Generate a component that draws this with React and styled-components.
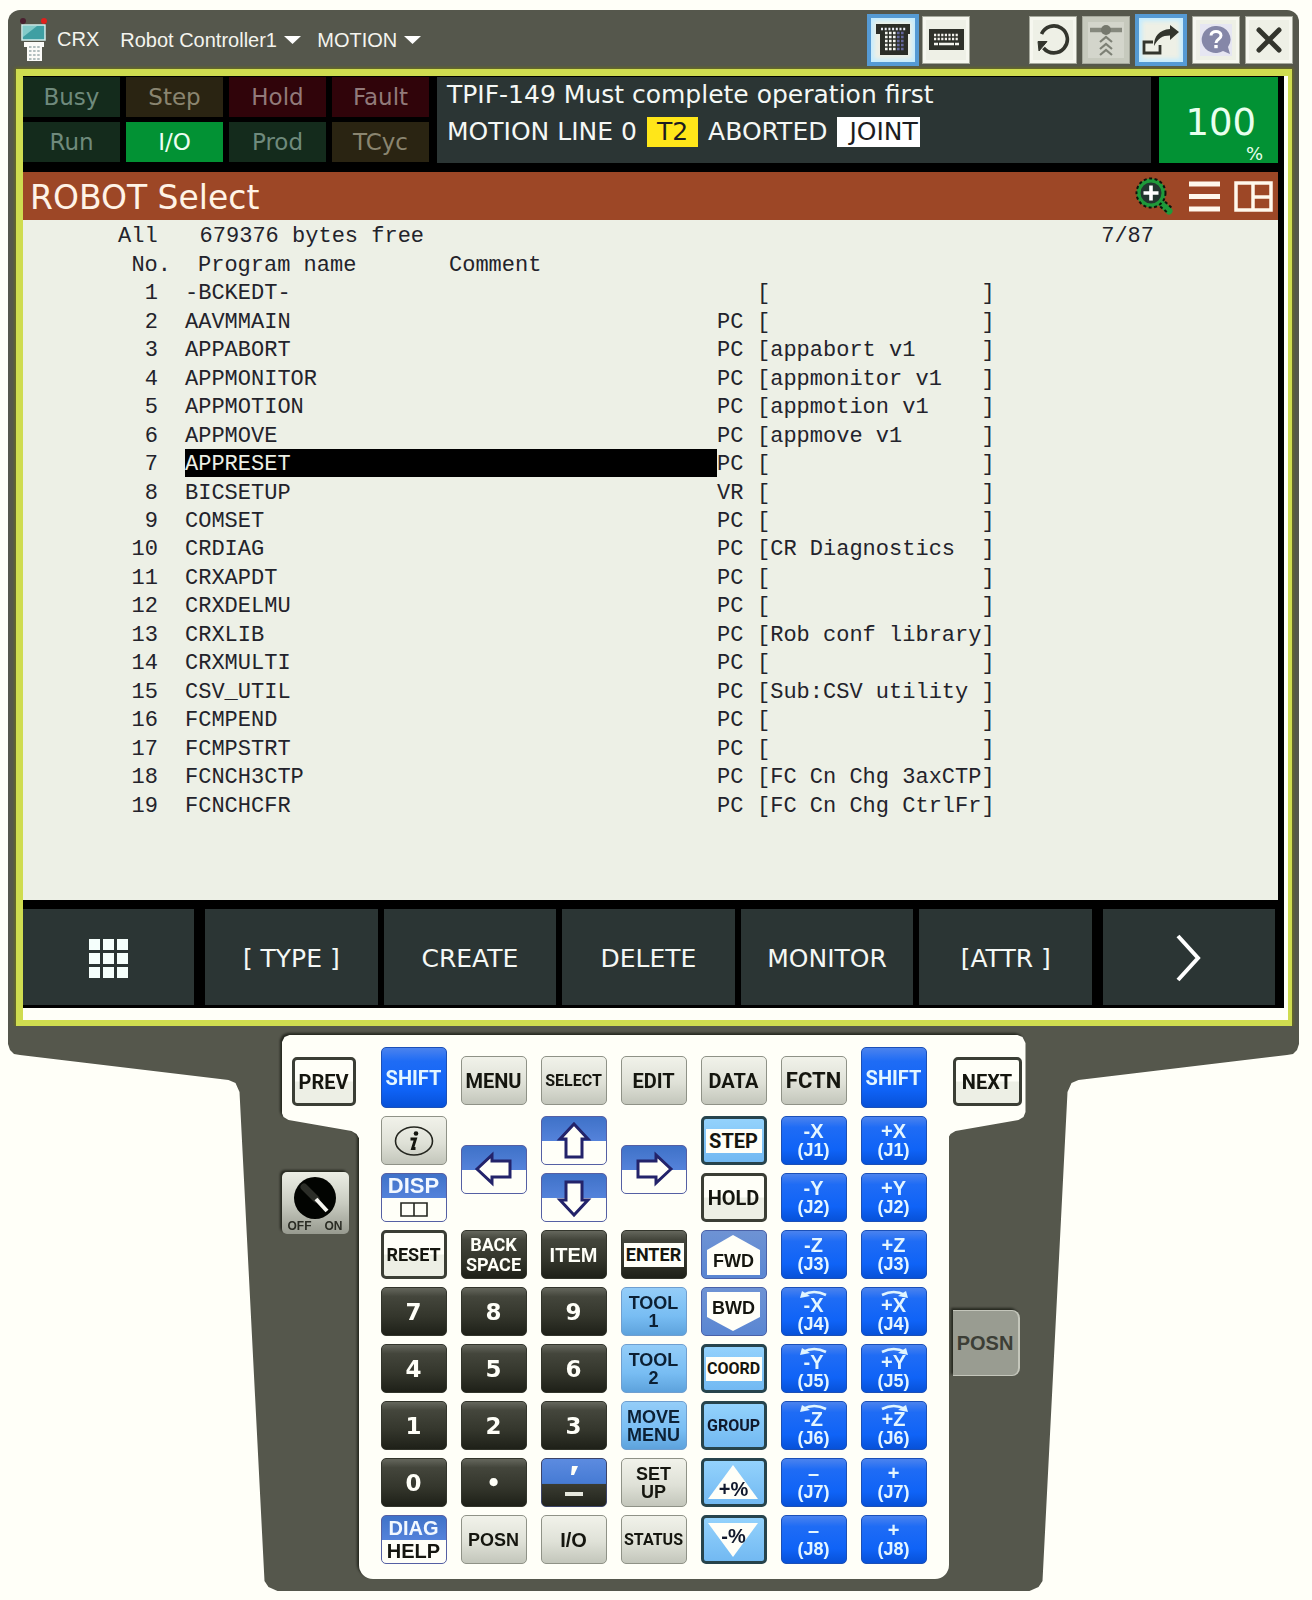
import React from "react";
import styled, { createGlobalStyle, css } from "styled-components";

const ui = `"DejaVu Sans", Verdana, sans-serif`;
const arial = `"Liberation Sans", Arial, sans-serif`;
const narrow = `Roboto, "Arial Narrow", sans-serif`;

const Global = createGlobalStyle`
  * { box-sizing: border-box; }
  body { margin: 0; background: #fffff8; font-family: ${arial}; }
  button { font: inherit; color: inherit; padding: 0; border: 0; cursor: pointer; }
`;

const Device = styled.main`
  margin: 0 13px 9px 8px;
  padding-top: 10px;
  min-width: 1180px;
`;

/* ---------- window header ---------- */

const Header = styled.header`
  display: flex;
  align-items: center;
  height: 59px;
  padding: 0 6px 0 11px;
  background: #55574c;
  border-radius: 12px 12px 0 0;
  color: #f4f4ee;
  font-size: 20px;
`;

const AppName = styled.span`
  margin: 0 21px 0 8px;
`;

const Picker = styled.label`
  display: grid;
  align-items: center;
  margin-right: 16px;
  > * {
    grid-area: 1 / 1;
  }
  svg {
    justify-self: end;
    pointer-events: none;
  }
`;

const PickerSelect = styled.select`
  appearance: none;
  border: 0;
  padding: 0 24px 0 0;
  background: transparent;
  color: inherit;
  font: inherit;
`;

const Tools = styled.div`
  display: flex;
  align-items: center;
  gap: ${(p) => p.$gap}px;
  margin-left: ${(p) => (p.$first ? "auto" : "59px")};
`;

const Tool = styled.button`
  display: grid;
  place-items: center;
  width: 48px;
  height: 48px;
  border: 1px solid #a5a89c;
  background: #eef0e6;
  box-shadow: inset 0 0 0 3px #f6f7ef;
  ${(p) =>
    p.$active &&
    css`
      width: 52px;
      height: 52px;
      border: 4px solid #559ad4;
      box-shadow: inset 0 0 4px 3px #c4ecff;
    `}
  ${(p) =>
    p.disabled &&
    css`
      background: #d3d5cb;
      box-shadow: inset 0 0 0 5px #c6c9bd;
    `}
`;

/* ---------- screen ---------- */

const Screen = styled.section`
  margin: 0;
  padding: 0 7px 0 8px;
  background: #55574c;
`;

const Bezel = styled.div`
  border: solid #cfdc50;
  border-width: 7px 4px 6px 7px;
  padding: 0 4px 12px 0;
  background: #fffff8;
  box-shadow: 0 0 3px 1px #6c7018;
`;

const Display = styled.div`
  background: #000;
  padding-right: 6px;
  font-family: ${ui};
`;

const StatusBar = styled.div`
  display: flex;
  gap: 8px;
  padding: 1px 0 9px;
`;

const Flags = styled.div`
  display: grid;
  grid-template-columns: repeat(4, 97px);
  grid-template-rows: 40px 40px;
  gap: 5px 6px;
  height: 86px;
`;

const tones = {
  green: ["#142b1c", "#6f8a7c"],
  amber: ["#2a2412", "#8a8570"],
  red: ["#30040a", "#927a7a"],
  on: ["#029234", "#ecfff2"],
};

const Flag = styled.span`
  display: grid;
  place-items: center;
  font-size: 23px;
  line-height: 38px;
  background: ${(p) => tones[p.$tone][0]};
  color: ${(p) => tones[p.$tone][1]};
`;

const Message = styled.div`
  flex: 1;
  padding: 2px 10px;
  background: #2b3534;
  color: #f5f8f5;
  font-size: 25px;
`;

const Alarm = styled.p`
  margin: 0;
  line-height: 32px;
`;

const State = styled.p`
  display: flex;
  margin: 6px 0 0;
  gap: 10px;
  line-height: 30px;
`;

const Tag = styled.span`
  padding: 0 ${(p) => (p.$mode ? 10 : 2)}px 0 ${(p) => (p.$mode ? 10 : 12)}px;
  background: ${(p) => (p.$mode ? "#ffe619" : "#fff")};
  color: #1c1c20;
`;

const Override = styled.div`
  width: 119px;
  padding: 24px 15px 0 0;
  background: #029234;
  color: #e8ffee;
  text-align: right;
`;

const OverrideValue = styled.div`
  padding-right: 7px;
  font-size: 37px;
  line-height: 44px;
`;

const OverrideUnit = styled.div`
  font-size: 18px;
  line-height: 18px;
`;

const TitleBar = styled.div`
  display: flex;
  align-items: center;
  height: 48px;
  padding: 0 5px 0 7px;
  background: #9d4726;
  color: #fff3e6;
`;

const Title = styled.h1`
  flex: 1;
  margin: 0;
  padding-top: 4px;
  font-size: 33px;
  font-weight: 400;
  line-height: 44px;
`;

const TitleButton = styled.button`
  display: grid;
  place-items: center;
  margin-left: 14px;
  background: transparent;
`;

const Listing = styled.div`
  height: 680px;
  background: #edf0e6;
  color: #23232b;
  font-family: "Liberation Mono", "Courier New", monospace;
  font-size: 22px;
  line-height: 24px;
`;

const Summary = styled.div`
  display: flex;
  height: 30px;
  padding: 5px 124px 0 95px;
`;

const Free = styled.span`
  flex: 1;
  padding-left: 42px;
`;

const Programs = styled.table`
  width: 100%;
  height: 569px;
  border-collapse: collapse;
  table-layout: fixed;
`;

const HeadCell = styled.th`
  padding: 4px ${(p) => (p.$right ? 14 : 0)}px 0 ${(p) => (p.$inset ? 13 : 0)}px;
  font-weight: 400;
  text-align: ${(p) => (p.$right ? "right" : "left")};
`;

const Cell = styled.td`
  padding: 4px ${(p) => (p.$right ? 27 : 0)}px 0 0;
  text-align: ${(p) => (p.$right ? "right" : "left")};
  white-space: pre;
  ${(p) =>
    p.$selected &&
    css`
      background: #000;
      color: #edf0e6;
    `}
`;

const SoftKeys = styled.nav`
  display: grid;
  grid-template-columns: 171px 1fr 172px;
  gap: 11px;
  height: 108px;
  padding: 9px 3px 3px 0;
`;

const SoftGroup = styled.div`
  display: grid;
  grid-template-columns: repeat(5, 1fr);
  gap: 6px;
`;

const SoftKey = styled.button`
  display: grid;
  place-items: center;
  padding-top: 2px;
  background: #2b3534;
  color: #f5f8f5;
  font-size: 25px;
  white-space: pre;
`;

/* ---------- key pad ---------- */

const Housing = styled.section`
  display: flex;
  justify-content: center;
  height: 565px;
  padding-top: 9px;
  background: #55574c;
  clip-path: polygon(
    0 0, 100% 0, 100% 18px, calc(100% - 2px) 24px, calc(100% - 6px) 28px, calc(100% - 12px) 29px,
    calc(50% + 425px) 54px, calc(50% + 418px) 57px, calc(50% + 414px) 66px,
    calc(50% + 389px) 555px, calc(50% + 385px) 561px, calc(50% + 376px) 100%,
    calc(50% - 376px) 100%, calc(50% - 385px) 561px, calc(50% - 389px) 555px,
    calc(50% - 414px) 66px, calc(50% - 418px) 57px, calc(50% - 425px) 54px,
    12px 29px, 6px 28px, 2px 24px, 0 18px
  );
`;

const Plate = styled.div`
  display: flex;
  align-items: flex-start;
  filter: drop-shadow(-2px -2px 1px #262820);
`;

const Side = styled.div`
  width: 78px;
`;

const Wing = styled.div`
  height: 104px;
  padding: 22px 4px 0 ${(p) => (p.$right ? 5 : 10)}px;
  background: #fffff8;
  clip-path: ${(p) =>
    p.$right
      ? "polygon(0 0, 70px 0, 75px 2px, 78px 8px, 78px 77px, 76px 82px, 71px 85px, 8px 96px, 3px 99px, 0 104px)"
      : "polygon(100% 0, 8px 0, 3px 2px, 0 8px, 0 77px, 2px 82px, 7px 85px, 70px 96px, 75px 99px, 100% 104px)"};
`;

/* overlaps the wings by a pixel on either side so that no seam shows */
const Pad = styled.div`
  display: grid;
  grid-template-columns: repeat(7, 1fr);
  grid-template-rows: 61px repeat(8, 49px);
  gap: 8px 14px;
  width: 590px;
  margin: 0 -1px;
  padding: 12px 22px 15px;
  background: #fffff8;
  border-radius: 0 0 14px 14px;
`;

const skins = {
  light: css`
    background: linear-gradient(#f1f2ea, #dfe1d7 55%, #c3c6bb);
    border: 1px solid #8f9287;
    color: #15160f;
  `,
  outline: css`
    background: linear-gradient(#fffff8 48%, #edefe5 52%);
    border: 3px solid #3b3e35;
    color: #15160f;
  `,
  blue: css`
    background: linear-gradient(#4b83ee, #1f6cf5 22%, #0f63f7 70%, #0751d8);
    border: 1px solid #1b50b8;
    color: #e4f6ff;
  `,
  dark: css`
    background: linear-gradient(#65675d, #44463c 18%, #34362c 60%, #1e2018);
    border: 1px solid #33352c;
    color: #fffff8;
  `,
  sky: css`
    background: linear-gradient(#94cdf8, #78bdf3 60%, #5da2dc);
    border: 1px solid #6f9fd0;
    color: #0c2034;
  `,
  skyOutline: css`
    background: linear-gradient(#93d2fc, #72b9f2);
    border: 3px solid #27444c;
    color: #10182c;
  `,
  split: css`
    background: linear-gradient(#3f72c8, #5482da 50%, #fffff8 50%);
    border: 1px solid #5560a4;
    color: #15160f;
  `,
  steel: css`
    background: linear-gradient(#6e93d4, #5a86d2);
    border: 1px solid #4a62a8;
    color: #15160f;
  `,
  splitDark: css`
    background: linear-gradient(#5c8be0, #467bd4 52%, #3a3c32 54%, #22241c);
    border: 1px solid #3c4468;
    color: #fffff8;
  `,
};

const Key = styled.button`
  display: grid;
  align-content: center;
  justify-content: stretch;
  justify-items: center;
  grid-column: ${(p) => p.$col};
  grid-row: ${(p) => p.$row};
  align-self: center;
  width: 100%;
  height: 49px;
  overflow: hidden;
  border-radius: 5px;
  font-family: ${(p) => (p.$narrow ? narrow : arial)};
  font-size: ${(p) => p.$size || 18}px;
  font-weight: 700;
  line-height: ${(p) => p.$line || 20}px;
  white-space: nowrap;
  ${(p) => skins[p.$skin]}
`;

const TopKey = styled(Key)`
  align-self: end;
  margin-bottom: 3px;
`;

const ShiftKey = styled(Key)`
  height: 61px;
`;

const DigitKey = styled(Key)`
  font-family: ${ui};
  font-size: 23px;
`;

const Half = styled.span`
  display: grid;
  place-items: center;
  height: 23px;
  color: ${(p) => (p.$light ? "#f2f8ff" : "inherit")};
`;

const Stripe = styled.span`
  width: calc(100% - 4px);
  padding: 2px 0;
  background: #fffff8;
  color: #15160f;
`;

const Axis = styled.span`
  font-size: 20px;
  line-height: 20px;
`;

const Joint = styled.span`
  font-size: 18px;
  line-height: 19px;
`;

const Swing = styled.svg`
  margin-bottom: -4px;
`;

const Pictured = styled.span`
  display: grid;
  place-items: center;
  > * {
    grid-area: 1 / 1;
  }
`;

const Caption = styled.span`
  z-index: 1;
  padding-top: ${(p) => (p.$low ? p.$low : 0)}px;
  padding-bottom: ${(p) => (p.$high ? p.$high : 0)}px;
`;

const Switch = styled.button`
  display: grid;
  justify-items: center;
  align-content: space-between;
  width: 67px;
  height: 62px;
  margin: 33px 0 0;
  padding: 5px 4px 1px;
  border-radius: 5px;
  background: linear-gradient(#eceee5, #c9ccc1 50%, #979a8f);
  color: #2a2c24;
`;

const SwitchLabels = styled.span`
  display: flex;
  justify-content: space-between;
  width: 100%;
  padding: 0 2px;
  font-size: 12px;
  font-weight: 700;
  line-height: 13px;
`;

const SideKey = styled.button`
  width: 67px;
  height: 66px;
  margin: 171px 0 0 5px;
  border: solid #c4c6bb;
  border-width: 1px 2px 1px 0;
  border-radius: 0 8px 8px 0;
  background: #999c91;
  color: #3c3e36;
  font-size: 20px;
  font-weight: 700;
`;

/* ---------- drawings ---------- */

const Pendant = () => (
  <svg width="30" height="46" viewBox="0 0 30 46">
    <path d="M4 4v14M26 4v14" stroke="#3a3a36" strokeWidth="2" />
    <circle cx="4" cy="4" r="3" fill="#4a2030" />
    <circle cx="25" cy="4" r="3" fill="#e0201c" />
    <rect x="3" y="8" width="23" height="15" fill="#3f9fa3" stroke="#d5eeec" strokeWidth="1.5" />
    <path d="M4 9h14L4 20z" fill="#84cbca" />
    <path d="M5 25h20v5h-2v14H8V30H5z" fill="#fbfbf8" />
    <path d="M10 30h11M10 34h11M10 38h11M10 42h11" stroke="#9aa" strokeWidth="1.6" strokeDasharray="2.5 1.6" />
  </svg>
);

const Caret = () => (
  <svg width="17" height="9" viewBox="0 0 17 9">
    <path d="M0 1h17L8.500 9z" fill="#fff" />
  </svg>
);

const KeypadIcon = () => (
  <svg width="34" height="31" viewBox="0 0 34 31">
    <path d="M0 0h34v10h-2v21H4V10H0z" fill="#2c2e28" />
    <path d="M5 5h25" stroke="#e8ecf4" strokeWidth="2.4" strokeDasharray="2 1.700" />
    <path d="M9 9h11M9 13h11M9 17h11M9 21h11M9 25h11" stroke="#f4f4ee" strokeWidth="2.4" strokeDasharray="2.600 1.400" />
    <path d="M21 9h7M21 13h7M21 17h7M21 21h7M21 25h7" stroke="#65689c" strokeWidth="2.4" strokeDasharray="2.600 1.400" />
  </svg>
);

const KeyboardIcon = () => (
  <svg width="35" height="21" viewBox="0 0 35 21">
    <rect width="35" height="21" fill="#2f312a" />
    <path d="M5 6h25M5 10h25" stroke="#f4f4ee" strokeWidth="2.400" strokeDasharray="2.200 1.400" />
    <path d="M5 15h4M10 15h15M26 15h4" stroke="#f4f4ee" strokeWidth="2.400" />
  </svg>
);

const ReloadIcon = () => (
  <svg width="34" height="34" viewBox="0 0 34 34" fill="none">
    <path d="M5.500 11A13.500 13.500 0 1 1 7.500 25" stroke="#33352d" strokeWidth="3.600" />
    <path d="M2 18.500h9L3 28z" fill="#33352d" stroke="#33352d" />
  </svg>
);

const DetachIcon = () => (
  <svg width="32" height="32" viewBox="0 0 32 32" fill="none">
    <path d="M0 6h32" stroke="#85887d" strokeWidth="4.500" />
    <circle cx="16" cy="6" r="5" fill="#75786d" />
    <path d="M10 18l6-5 6 5M10 25l6-5 6 5M10 31l6-5 6 5" stroke="#7d8075" strokeWidth="2.200" />
  </svg>
);

const PopOutIcon = () => (
  <svg width="38" height="32" viewBox="0 0 38 32">
    <path d="M11 18H2v11h16v-8" fill="none" stroke="#33352d" strokeWidth="2.800" />
    <path d="M12 22C12 12 17 6 28 5V1l9 7-9 8v-4.500c-8 0-12 3-16 10.500z" fill="#33352d" />
  </svg>
);

const HelpIcon = () => (
  <svg width="32" height="32" viewBox="0 0 32 32">
    <rect width="32" height="32" fill="#e6e6f2" />
    <path d="M15 2a14 13.500 0 1 0 8 25l7 3-2-7A14 13.500 0 0 0 15 2z" fill="#8587a8" />
    <path d="M11 11.500c0-5.500 10-5.500 10 0 0 4-5 3.500-5 7.500" fill="none" stroke="#fff" strokeWidth="3" />
    <rect x="14.300" y="21" width="3.400" height="3.200" fill="#fff" />
  </svg>
);

const CloseIcon = () => (
  <svg width="26" height="26" viewBox="0 0 26 26">
    <path d="M3 3l20 20M23 3L3 23" stroke="#33352d" strokeWidth="5" strokeLinecap="round" />
  </svg>
);

const ZoomIcon = () => (
  <svg width="40" height="40" viewBox="0 0 40 40">
    <path d="M23 24l11 11" stroke="#1f9a3a" strokeWidth="7" strokeLinecap="round" />
    <path d="M26 22l11 10M21 27l12 10" stroke="#0c140c" strokeWidth="2" strokeDasharray="3 2.500" />
    <circle cx="16" cy="17" r="12.500" fill="#22352f" stroke="#1f9a3a" strokeWidth="4" />
    <circle cx="16" cy="17" r="14.500" fill="none" stroke="#0c140c" strokeWidth="2" strokeDasharray="3 2.500" />
    <path d="M16 9.500v15M8.500 17h15" stroke="#fff" strokeWidth="3.600" />
  </svg>
);

const MenuIcon = () => (
  <svg width="31" height="31" viewBox="0 0 31 31">
    <path d="M0 3h31M0 15.500h31M0 28h31" stroke="#fff8ec" strokeWidth="5" />
  </svg>
);

const LayoutIcon = () => (
  <svg width="39" height="31" viewBox="0 0 39 31" fill="none" stroke="#fff8ec" strokeWidth="3.500">
    <path d="M2 2h35v27H2zM19 2v27M19 16h18" />
  </svg>
);

const GridIcon = () => (
  <svg width="39" height="39" viewBox="0 0 39 39">
    {[0, 14, 28].map((y) =>
      [0, 14, 28].map((x) => <rect key={`${x}-${y}`} x={x} y={y} width="11" height="11" fill="#f5fffc" />)
    )}
  </svg>
);

const NextIcon = () => (
  <svg width="28" height="48" viewBox="0 0 28 48">
    <path d="M3 2l20 22L3 46" fill="none" stroke="#fff" strokeWidth="4" />
  </svg>
);

const turns = { up: 0, right: 90, down: 180, left: 270 };

const Arrow = ({ to }) => (
  <svg width="40" height="40" viewBox="0 0 40 40">
    <path
      d="M20 3L34 18H28V36H12V18H6z"
      fill="#fffff8"
      stroke="#23236a"
      strokeWidth="3"
      transform={`rotate(${turns[to]} 20 20)`}
    />
  </svg>
);

const InfoIcon = () => (
  <svg width="40" height="32" viewBox="0 0 40 32">
    <ellipse cx="20" cy="16" rx="18.500" ry="14" fill="none" stroke="#24261f" strokeWidth="1.600" />
    <circle cx="22" cy="8.500" r="2.300" fill="#15160f" />
    <path d="M16.500 14h5l-3 9.500h3" fill="none" stroke="#15160f" strokeWidth="2.800" />
  </svg>
);

const PanesIcon = () => (
  <svg width="28" height="15" viewBox="0 0 28 15" fill="none" stroke="#24261f" strokeWidth="1.600">
    <path d="M1 1h26v13H1zM14 1v13" />
  </svg>
);

const Curve = ({ flip }) => (
  <Swing width="28" height="9" viewBox="0 0 28 9">
    <g transform={flip ? "translate(28 0) scale(-1 1)" : undefined}>
      <path d="M3 5Q14-1 26 5" fill="none" stroke="#dff4ff" strokeWidth="2.600" />
      <path d="M0 8l2-7 8 5z" fill="#dff4ff" />
    </g>
  </Swing>
);

const Knob = () => (
  <svg width="42" height="42" viewBox="0 0 42 42">
    <circle cx="21" cy="21" r="21" fill="#020401" />
    <path d="M10 10l12 12" stroke="#2c2e28" strokeWidth="7" strokeLinecap="round" />
    <path d="M22 22l11 12" stroke="#f6f6f0" strokeWidth="4" />
  </svg>
);

const Shape = ({ d }) => (
  <svg width="57" height="45" viewBox="0 0 57 45">
    <path d={d} fill="#fffff8" />
  </svg>
);

const CommaIcon = () => (
  <svg width="10" height="12" viewBox="0 0 10 12">
    <path d="M3 1h6L5 10H2z" fill="#fffff8" />
  </svg>
);

const DashIcon = () => (
  <svg width="18" height="4" viewBox="0 0 18 4">
    <path d="M0 0h18v4H0z" fill="#e6e8de" />
  </svg>
);

/* ---------- data ---------- */

const flags = [
  ["Busy", "green"], ["Step", "amber"], ["Hold", "red"], ["Fault", "red"],
  ["Run", "green"], ["I/O", "on"], ["Prod", "green"], ["TCyc", "amber"],
];

const programs = [
  ["-BCKEDT-", "", ""],
  ["AAVMMAIN", "PC", ""],
  ["APPABORT", "PC", "appabort v1"],
  ["APPMONITOR", "PC", "appmonitor v1"],
  ["APPMOTION", "PC", "appmotion v1"],
  ["APPMOVE", "PC", "appmove v1"],
  ["APPRESET", "PC", ""],
  ["BICSETUP", "VR", ""],
  ["COMSET", "PC", ""],
  ["CRDIAG", "PC", "CR Diagnostics"],
  ["CRXAPDT", "PC", ""],
  ["CRXDELMU", "PC", ""],
  ["CRXLIB", "PC", "Rob conf library"],
  ["CRXMULTI", "PC", ""],
  ["CSV_UTIL", "PC", "Sub:CSV utility"],
  ["FCMPEND", "PC", ""],
  ["FCMPSTRT", "PC", ""],
  ["FCNCH3CTP", "PC", "FC Cn Chg 3axCTP"],
  ["FCNCHCFR", "PC", "FC Cn Chg CtrlFr"],
];

const selected = 7;

const digits = [
  ["7", 1, 5], ["8", 2, 5], ["9", 3, 5],
  ["4", 1, 6], ["5", 2, 6], ["6", 3, 6],
  ["1", 1, 7], ["2", 2, 7], ["3", 3, 7],
  ["0", 1, 8], ["•", 2, 8],
];

const axes = ["X", "Y", "Z", "X", "Y", "Z", "", ""];

const topKeys = [
  ["MENU", 2, 20], ["SELECT", 3, 16], ["EDIT", 4, 20], ["DATA", 5, 20], ["FCTN", 6, 22],
];

function JogKeys() {
  return axes.flatMap((axis, i) =>
    ["-", "+"].map((sign, side) => (
      <Key key={`${sign}${i}`} $skin="blue" $col={6 + side} $row={i + 2}>
        {i > 2 && i < 6 && <Curve flip={side === 1} />}
        <Axis>{(sign === "-" && !axis ? "–" : sign) + axis}</Axis>
        <Joint>(J{i + 1})</Joint>
      </Key>
    ))
  );
}

export default function App() {
  return (
    <Device>
      <Global />
      <Header>
        <Pendant />
        <AppName>CRX</AppName>
        <Picker>
          <PickerSelect aria-label="Controller">
            <option>Robot Controller1</option>
          </PickerSelect>
          <Caret />
        </Picker>
        <Picker>
          <PickerSelect aria-label="Task">
            <option>MOTION</option>
          </PickerSelect>
          <Caret />
        </Picker>
        <Tools $first $gap={3}>
          <Tool $active aria-label="Key pad"><KeypadIcon /></Tool>
          <Tool aria-label="Keyboard"><KeyboardIcon /></Tool>
        </Tools>
        <Tools $gap={5}>
          <Tool aria-label="Reload"><ReloadIcon /></Tool>
          <Tool disabled aria-label="Collapse"><DetachIcon /></Tool>
          <Tool $active aria-label="Pop out"><PopOutIcon /></Tool>
          <Tool aria-label="Help"><HelpIcon /></Tool>
          <Tool aria-label="Close"><CloseIcon /></Tool>
        </Tools>
      </Header>

      <Screen>
        <Bezel>
          <Display>
            <StatusBar>
              <Flags>
                {flags.map(([name, tone]) => (
                  <Flag key={name} $tone={tone}>{name}</Flag>
                ))}
              </Flags>
              <Message>
                <Alarm>TPIF-149 Must complete operation first</Alarm>
                <State>
                  <span>MOTION LINE 0</span>
                  <Tag $mode>T2</Tag>
                  <span>ABORTED</span>
                  <Tag>JOINT</Tag>
                </State>
              </Message>
              <Override>
                <OverrideValue>100</OverrideValue>
                <OverrideUnit>%</OverrideUnit>
              </Override>
            </StatusBar>

            <TitleBar>
              <Title>ROBOT Select</Title>
              <TitleButton aria-label="Zoom"><ZoomIcon /></TitleButton>
              <TitleButton aria-label="Menu"><MenuIcon /></TitleButton>
              <TitleButton aria-label="Layout"><LayoutIcon /></TitleButton>
            </TitleBar>

            <Listing>
              <Summary>
                <span>All</span>
                <Free>679376 bytes free</Free>
                <span>7/87</span>
              </Summary>
              <Programs>
                <colgroup>
                  <col width="162" />
                  <col width="264" />
                  <col width="268" />
                  <col width="40" />
                  <col />
                </colgroup>
                <thead>
                  <tr>
                    <HeadCell $right>No.</HeadCell>
                    <HeadCell $inset>Program name</HeadCell>
                    <HeadCell colSpan={3}>Comment</HeadCell>
                  </tr>
                </thead>
                <tbody>
                  {programs.map(([name, type, comment], i) => (
                    <tr key={name}>
                      <Cell $right>{i + 1}</Cell>
                      <Cell colSpan={2} $selected={i + 1 === selected}>{name}</Cell>
                      <Cell>{type}</Cell>
                      <Cell>{`[${comment.padEnd(16)}]`}</Cell>
                    </tr>
                  ))}
                </tbody>
              </Programs>
            </Listing>

            <SoftKeys>
              <SoftKey aria-label="Functions"><GridIcon /></SoftKey>
              <SoftGroup>
                <SoftKey>[ TYPE ]</SoftKey>
                <SoftKey>CREATE</SoftKey>
                <SoftKey>DELETE</SoftKey>
                <SoftKey>MONITOR</SoftKey>
                <SoftKey>[ATTR ]</SoftKey>
              </SoftGroup>
              <SoftKey aria-label="Next page"><NextIcon /></SoftKey>
            </SoftKeys>
          </Display>
        </Bezel>
      </Screen>

      <Housing>
        <Plate>
          <Side>
            <Wing><Key $skin="outline" $size={20} $narrow>PREV</Key></Wing>
            <Switch>
              <Knob />
              <SwitchLabels><span>OFF</span><span>ON</span></SwitchLabels>
            </Switch>
          </Side>

          <Pad>
            <ShiftKey $skin="blue" $col={1} $row={1} $size={20} $narrow>SHIFT</ShiftKey>
            {topKeys.map(([name, col, size]) => (
              <TopKey key={name} $skin="light" $col={col} $row={1} $size={size} $narrow>{name}</TopKey>
            ))}
            <ShiftKey $skin="blue" $col={7} $row={1} $size={20} $narrow>SHIFT</ShiftKey>

            <Key $skin="light" $col={1} $row={2} aria-label="Information"><InfoIcon /></Key>
            <Key $skin="split" $col={2} $row="2 / 4" aria-label="Left"><Arrow to="left" /></Key>
            <Key $skin="split" $col={3} $row={2} aria-label="Up"><Arrow to="up" /></Key>
            <Key $skin="split" $col={3} $row={3} aria-label="Down"><Arrow to="down" /></Key>
            <Key $skin="split" $col={4} $row="2 / 4" aria-label="Right"><Arrow to="right" /></Key>
            <Key $skin="skyOutline" $col={5} $row={2} $size={20} $narrow><Stripe>STEP</Stripe></Key>
            <Key $skin="outline" $col={5} $row={3} $size={20} $narrow>HOLD</Key>

            <Key $skin="split" $col={1} $row={3} $size={22}>
              <Half $light>DISP</Half>
              <Half><PanesIcon /></Half>
            </Key>
            <Key $skin="outline" $col={1} $row={4} $size={18} $narrow>RESET</Key>
            <Key $skin="dark" $col={2} $row={4} $size={18} $narrow>BACK<br />SPACE</Key>
            <Key $skin="dark" $col={3} $row={4} $size={20}>ITEM</Key>
            <Key $skin="dark" $col={4} $row={4} $size={18} $narrow><Stripe>ENTER</Stripe></Key>
            <Key $skin="steel" $col={5} $row={4}>
              <Pictured>
                <Shape d="M28 3L55 18V43H2V18z" />
                <Caption $low={12}>FWD</Caption>
              </Pictured>
            </Key>
            <Key $skin="steel" $col={5} $row={5}>
              <Pictured>
                <Shape d="M28 42L55 28V3H2V28z" />
                <Caption $high={8}>BWD</Caption>
              </Pictured>
            </Key>

            {digits.map(([digit, col, row]) => (
              <DigitKey key={digit} $skin="dark" $col={col} $row={row}>{digit}</DigitKey>
            ))}
            <Key $skin="splitDark" $col={3} $row={8} aria-label="Comma or minus">
              <Half><CommaIcon /></Half>
              <Half><DashIcon /></Half>
            </Key>

            <Key $skin="sky" $col={4} $row={5} $size={18} $line={18}>TOOL<br />1</Key>
            <Key $skin="sky" $col={4} $row={6} $size={18} $line={18}>TOOL<br />2</Key>
            <Key $skin="sky" $col={4} $row={7} $size={18} $line={18}>MOVE<br />MENU</Key>
            <Key $skin="light" $col={4} $row={8} $size={18} $line={18}>SET<br />UP</Key>

            <Key $skin="skyOutline" $col={5} $row={6} $size={16} $narrow><Stripe>COORD</Stripe></Key>
            <Key $skin="skyOutline" $col={5} $row={7} $size={16} $narrow>GROUP</Key>
            <Key $skin="skyOutline" $col={5} $row={8} $size={20}>
              <Pictured>
                <Shape d="M28 5L53 39H3z" />
                <Caption $low={12}>+%</Caption>
              </Pictured>
            </Key>
            <Key $skin="skyOutline" $col={5} $row={9} $size={20}>
              <Pictured>
                <Shape d="M28 40L53 6H3z" />
                <Caption $high={8}>-%</Caption>
              </Pictured>
            </Key>

            <Key $skin="split" $col={1} $row={9} $size={20}>
              <Half $light>DIAG</Half>
              <Half>HELP</Half>
            </Key>
            <Key $skin="light" $col={2} $row={9} $size={18}>POSN</Key>
            <Key $skin="light" $col={3} $row={9} $size={20}>I/O</Key>
            <Key $skin="light" $col={4} $row={9} $size={16} $narrow>STATUS</Key>

            <JogKeys />
          </Pad>

          <Side>
            <Wing $right><Key $skin="outline" $size={20} $narrow>NEXT</Key></Wing>
            <SideKey>POSN</SideKey>
          </Side>
        </Plate>
      </Housing>
    </Device>
  );
}
